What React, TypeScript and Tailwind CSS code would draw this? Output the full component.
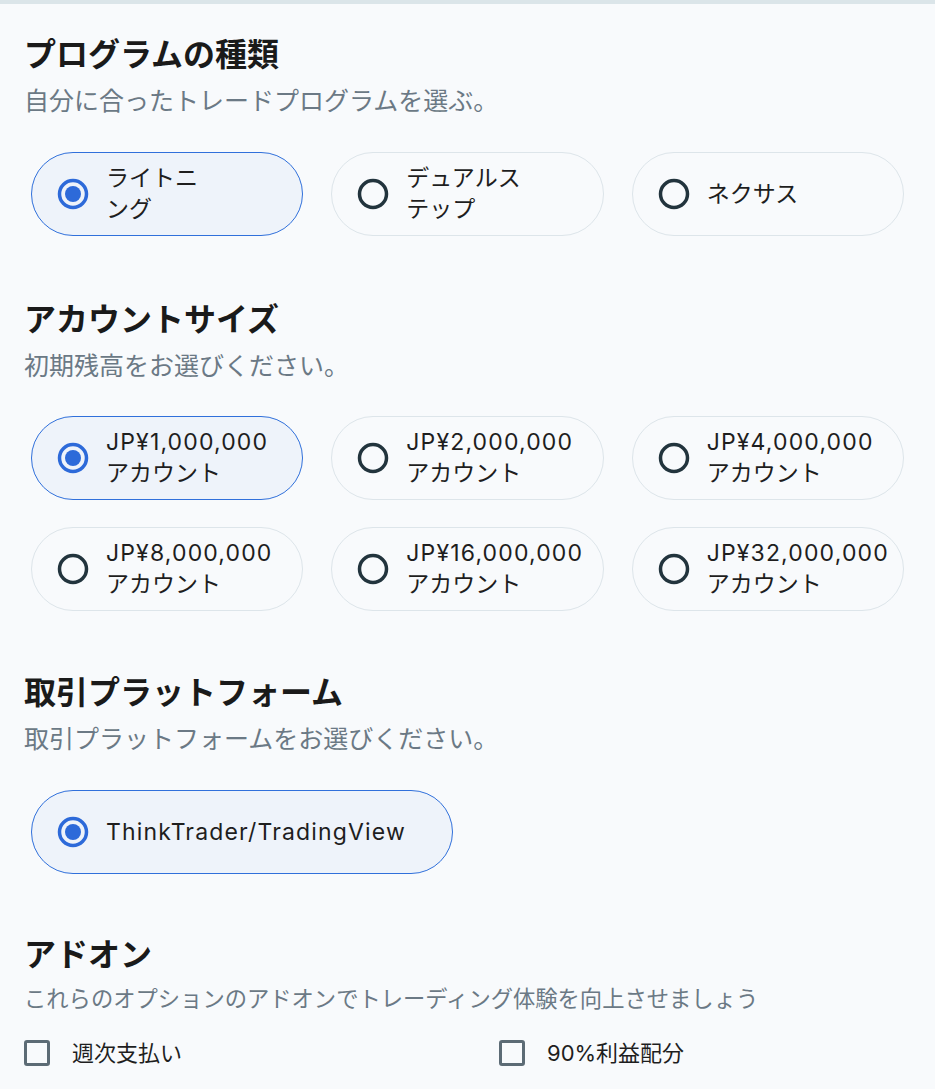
import React, { useState } from 'react';

const FONT = { fontFamily: 'Inter, "Noto Sans CJK JP", sans-serif' };

type Option = { id: string; lines: string[] };

const programs: Option[] = [
  { id: 'lightning', lines: ['ライトニ', 'ング'] },
  { id: 'dual', lines: ['デュアルス', 'テップ'] },
  { id: 'nexus', lines: ['ネクサス'] },
];

const sizes: Option[] = [
  { id: '1m', lines: ['JP¥1,000,000', 'アカウント'] },
  { id: '2m', lines: ['JP¥2,000,000', 'アカウント'] },
  { id: '4m', lines: ['JP¥4,000,000', 'アカウント'] },
  { id: '8m', lines: ['JP¥8,000,000', 'アカウント'] },
  { id: '16m', lines: ['JP¥16,000,000', 'アカウント'] },
  { id: '32m', lines: ['JP¥32,000,000', 'アカウント'] },
];

// latin lines in the reference are set a bit looser than Inter's default
const isLatin = (s: string) => /^[\x20-\x7e¥]+$/.test(s);

const Radio: React.FC<{ checked: boolean }> = ({ checked }) => (
  <svg viewBox="0 0 32 32" className="h-8 w-8 shrink-0">
    <circle
      cx="16"
      cy="16"
      r="13.5"
      fill="none"
      stroke={checked ? '#2d6ad9' : '#22343d'}
      strokeWidth="3.5"
    />
    {checked && <circle cx="16" cy="16" r="8" fill="#2d6ad9" />}
  </svg>
);

const OptionCard: React.FC<{
  option: Option;
  checked: boolean;
  onSelect: () => void;
  className?: string;
}> = ({ option, checked, onSelect, className = '' }) => (
  <button
    type="button"
    onClick={onSelect}
    className={`flex h-[84px] items-center gap-[17px] rounded-full border pl-[25px] text-left ${
      checked ? 'border-[#3070db] bg-[#eef3fa]' : 'border-[#dde5ea] bg-[#f8fafc]'
    } ${className}`}
  >
    <Radio checked={checked} />
    <span className="whitespace-nowrap text-[23px] leading-[31px] text-[#1e1e1e]">
      {option.lines.map((l, i) => (
        <span key={i} className={`block ${isLatin(l) ? 'tracking-[0.05em]' : ''}`}>
          {l}
        </span>
      ))}
    </span>
  </button>
);

const SectionHead: React.FC<{ title: string; sub: string; subClass?: string }> = ({
  title,
  sub,
  subClass = 'text-[25px] leading-[32px]',
}) => (
  <div>
    <h2 className="text-[32px] font-bold leading-[40px] text-[#1a1a1a]">{title}</h2>
    <p className={`mt-[10px] text-[#6b7985] ${subClass}`}>{sub}</p>
  </div>
);

const Checkbox: React.FC<{ label: string; checked: boolean; onToggle: () => void }> = ({
  label,
  checked,
  onToggle,
}) => (
  <label className="flex cursor-pointer items-center gap-[22px]" onClick={onToggle}>
    <span
      className={`flex h-[26px] w-[26px] items-center justify-center rounded-[3px] border-[3px] ${
        checked ? 'border-[#2d6ad9] bg-[#2d6ad9]' : 'border-[#5c6b75]'
      }`}
    />
    <span className="text-[22px] leading-[28px] text-[#1e1e1e]">{label}</span>
  </label>
);

export default function App() {
  const [program, setProgram] = useState('lightning');
  const [size, setSize] = useState('1m');
  const [weekly, setWeekly] = useState(false);
  const [split, setSplit] = useState(false);

  return (
    <div className="min-h-screen border-t-4 border-[#dbe5e9] bg-[#f8fafc] px-6 pt-[31px]" style={FONT}>
      <section>
        <SectionHead title="プログラムの種類" sub="自分に合ったトレードプログラムを選ぶ。" />
        <div className="mt-[35px] grid grid-cols-3 gap-[28px] px-[7px]">
          {programs.map((p) => (
            <OptionCard key={p.id} option={p} checked={program === p.id} onSelect={() => setProgram(p.id)} />
          ))}
        </div>
      </section>

      <section className="mt-[64px]">
        <SectionHead title="アカウントサイズ" sub="初期残高をお選びください。" />
        <div className="mt-[34px] grid grid-cols-3 gap-x-[28px] gap-y-[27px] px-[7px]">
          {sizes.map((s) => (
            <OptionCard key={s.id} option={s} checked={size === s.id} onSelect={() => setSize(s.id)} />
          ))}
        </div>
      </section>

      <section className="mt-[62px]">
        <SectionHead title="取引プラットフォーム" sub="取引プラットフォームをお選びください。" />
        <div className="mt-[35px] px-[7px]">
          <OptionCard
            option={{ id: 'tt', lines: ['ThinkTrader/TradingView'] }}
            checked
            onSelect={() => {}}
            className="w-[422px]"
          />
        </div>
      </section>

      <section className="mt-[61px]">
        <SectionHead
          title="アドオン"
          sub="これらのオプションのアドオンでトレーディング体験を向上させましょう"
          subClass="text-[22.3px] leading-[28px]"
        />
        <div className="mt-[26px] grid grid-cols-[475px_1fr] pb-8">
          <Checkbox label="週次支払い" checked={weekly} onToggle={() => setWeekly(!weekly)} />
          <Checkbox label="90%利益配分" checked={split} onToggle={() => setSplit(!split)} />
        </div>
      </section>
    </div>
  );
}
